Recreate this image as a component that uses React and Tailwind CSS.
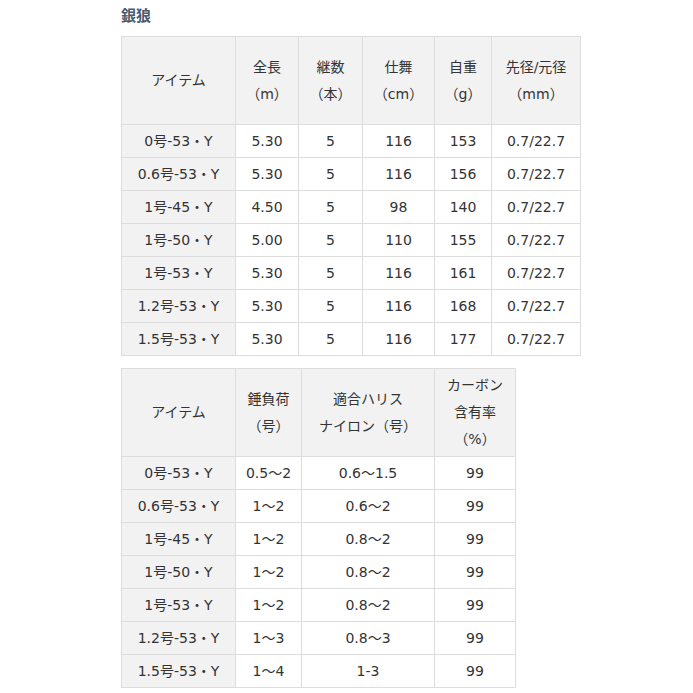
import React from "react";

const font = { fontFamily: '"DejaVu Sans", "Noto Sans CJK JP", sans-serif' };

const specRows = [
  ["0号-53・Y", "5.30", "5", "116", "153", "0.7/22.7"],
  ["0.6号-53・Y", "5.30", "5", "116", "156", "0.7/22.7"],
  ["1号-45・Y", "4.50", "5", "98", "140", "0.7/22.7"],
  ["1号-50・Y", "5.00", "5", "110", "155", "0.7/22.7"],
  ["1号-53・Y", "5.30", "5", "116", "161", "0.7/22.7"],
  ["1.2号-53・Y", "5.30", "5", "116", "168", "0.7/22.7"],
  ["1.5号-53・Y", "5.30", "5", "116", "177", "0.7/22.7"],
];

const lineRows = [
  ["0号-53・Y", "0.5～2", "0.6～1.5", "99"],
  ["0.6号-53・Y", "1～2", "0.6～2", "99"],
  ["1号-45・Y", "1～2", "0.8～2", "99"],
  ["1号-50・Y", "1～2", "0.8～2", "99"],
  ["1号-53・Y", "1～2", "0.8～2", "99"],
  ["1.2号-53・Y", "1～3", "0.8～3", "99"],
  ["1.5号-53・Y", "1～4", "1-3", "99"],
];

const th = "border border-[#dddddd] bg-[#f2f2f2] font-normal text-center align-middle leading-[27px] px-1";
const td = "border border-[#dddddd] text-center align-middle h-[33px] leading-[27px] px-1 whitespace-nowrap";

const DataTable = ({ widths, head, rows, headH }) => (
  <table className="border-collapse table-fixed text-[14px] text-[#333333]">
    <colgroup>
      {widths.map((w, i) => (
        <col key={i} style={{ width: w }} />
      ))}
    </colgroup>
    <thead>
      <tr className={headH}>
        {head.map((lines, i) => (
          <th key={i} className={th}>
            {lines.map((l, j) => (
              <div key={j}>{l}</div>
            ))}
          </th>
        ))}
      </tr>
    </thead>
    <tbody>
      {rows.map((r, i) => (
        <tr key={i}>
          {r.map((c, j) => (
            <td key={j} className={j === 0 ? td + " bg-[#f2f2f2]" : td + " bg-white"}>
              {c}
            </td>
          ))}
        </tr>
      ))}
    </tbody>
  </table>
);

const App = () => {
  return (
    <div className="w-[693px] h-[693px] bg-white pl-[121px] pt-[6px] overflow-hidden" style={font}>
      <h2 className="text-[15px] font-bold text-[#4b5a6e] leading-[20px] mb-[10px]">銀狼</h2>
      <DataTable
        widths={[114, 63, 64, 72, 57, 89]}
        headH="h-[88px]"
        head={[
          ["アイテム"],
          ["全長", "（m）"],
          ["継数", "（本）"],
          ["仕舞", "（cm）"],
          ["自重", "（g）"],
          ["先径/元径", "（mm）"],
        ]}
        rows={specRows}
      />
      <div className="h-[12px]" />
      <DataTable
        widths={[114, 66, 133, 81]}
        headH="h-[88px]"
        head={[
          ["アイテム"],
          ["錘負荷", "（号）"],
          ["適合ハリス", "ナイロン（号）"],
          ["カーボン", "含有率", "（%）"],
        ]}
        rows={lineRows}
      />
    </div>
  );
};

export default App;
